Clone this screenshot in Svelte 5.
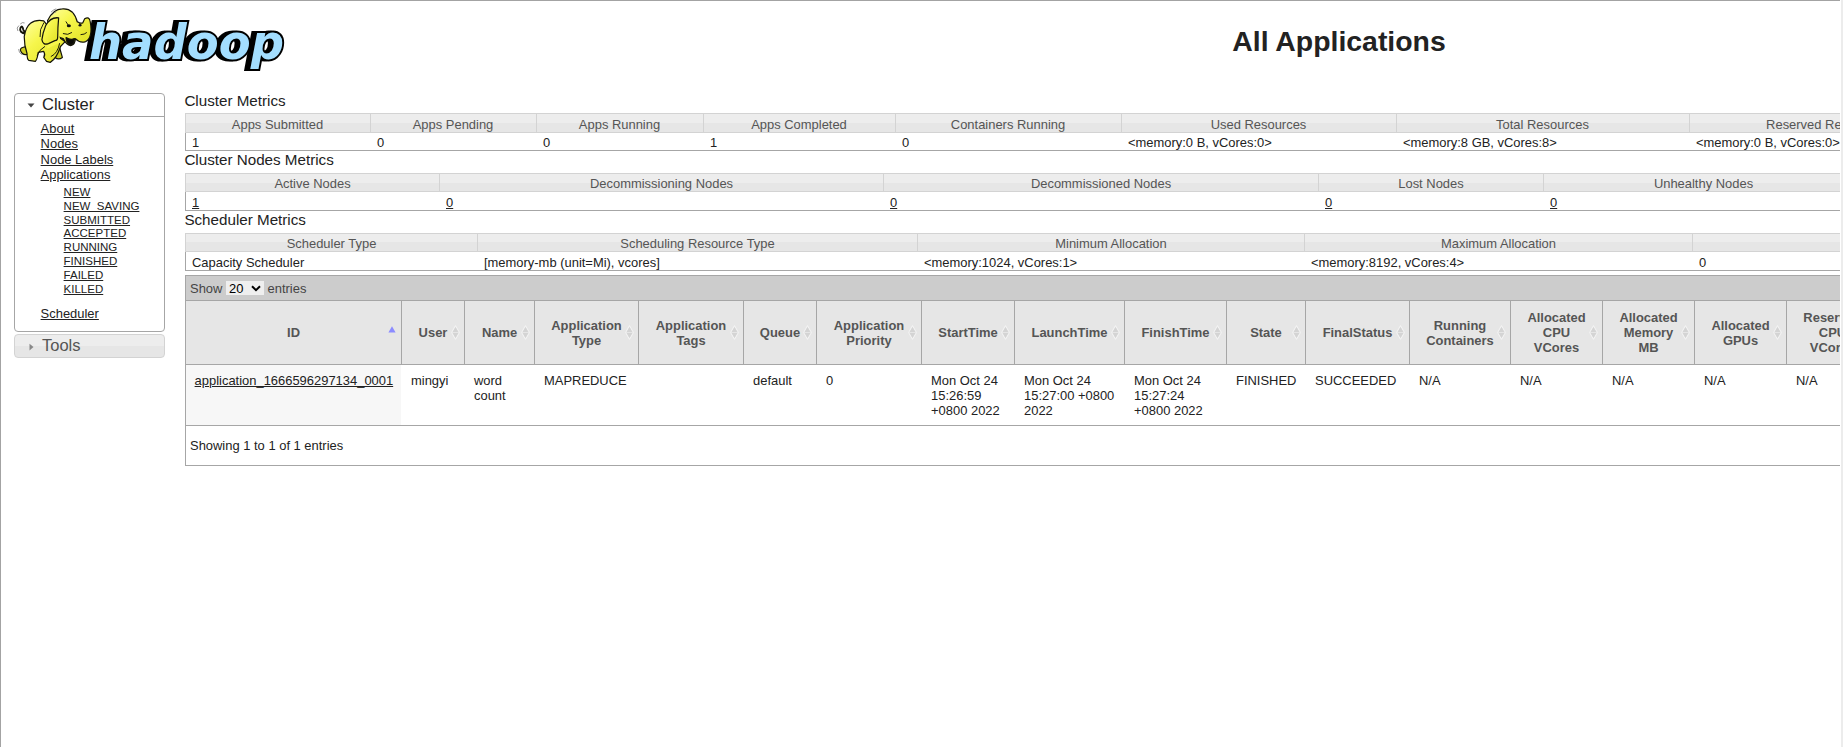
<script>
  const states = ['NEW', 'NEW_SAVING', 'SUBMITTED', 'ACCEPTED', 'RUNNING', 'FINISHED', 'FAILED', 'KILLED'];

  const metrics = [
    {
      title: 'Cluster Metrics',
      kind: 'first',
      cells: [
        [185, 'Apps Submitted', '1'],
        [166, 'Apps Pending', '0'],
        [167, 'Apps Running', '0'],
        [192, 'Apps Completed', '1'],
        [226, 'Containers Running', '0'],
        [275, 'Used Resources', '<memory:0 B, vCores:0>'],
        [293, 'Total Resources', '<memory:8 GB, vCores:8>'],
        [275, 'Reserved Resources', '<memory:0 B, vCores:0>'],
        [221, '', '']
      ]
    },
    {
      title: 'Cluster Nodes Metrics',
      kind: 'linked',
      cells: [
        [254, 'Active Nodes', '1'],
        [444, 'Decommissioning Nodes', '0'],
        [435, 'Decommissioned Nodes', '0'],
        [225, 'Lost Nodes', '0'],
        [320, 'Unhealthy Nodes', '0']
      ]
    },
    {
      title: 'Scheduler Metrics',
      kind: '',
      cells: [
        [292, 'Scheduler Type', 'Capacity Scheduler'],
        [440, 'Scheduling Resource Type', '[memory-mb (unit=Mi), vcores]'],
        [387, 'Minimum Allocation', '<memory:1024, vCores:1>'],
        [388, 'Maximum Allocation', '<memory:8192, vCores:4>'],
        [500, '', '0']
      ]
    }
  ];

  const columns = [
    [216, ['ID'], ['application_1666596297134_0001']],
    [63, ['User'], ['mingyi']],
    [70, ['Name'], ['word', 'count']],
    [104, ['Application', 'Type'], ['MAPREDUCE']],
    [105, ['Application', 'Tags'], []],
    [73, ['Queue'], ['default']],
    [105, ['Application', 'Priority'], ['0']],
    [93, ['StartTime'], ['Mon Oct 24', '15:26:59', '+0800 2022']],
    [110, ['LaunchTime'], ['Mon Oct 24', '15:27:00 +0800', '2022']],
    [102, ['FinishTime'], ['Mon Oct 24', '15:27:24', '+0800 2022']],
    [79, ['State'], ['FINISHED']],
    [104, ['FinalStatus'], ['SUCCEEDED']],
    [101, ['Running', 'Containers'], ['N/A']],
    [92, ['Allocated', 'CPU', 'VCores'], ['N/A']],
    [92, ['Allocated', 'Memory', 'MB'], ['N/A']],
    [92, ['Allocated', 'GPUs'], ['N/A']],
    [92, ['Reserved', 'CPU', 'VCores'], ['N/A']]
  ];

  const tracks = (list) => list.map((c) => c[0] + 'px').join(' ');
</script>

<div class="page">
  <header>
    <svg class="logo" width="285" height="76" viewBox="0 0 285 76">
      <defs>
        <linearGradient id="skin" x1="0" y1="0" x2="1" y2="1">
          <stop offset="0" stop-color="#ffffa0" />
          <stop offset="0.4" stop-color="#f6f64c" />
          <stop offset="1" stop-color="#dede20" />
        </linearGradient>
      </defs>
      <text class="wordmark" x="79" y="57" textLength="195" lengthAdjust="spacingAndGlyphs">hadoop</text>
      <g transform="translate(4 -1) scale(0.93 0.99)" stroke="#15150a" stroke-width="1.3" stroke-linejoin="round" stroke-linecap="round">
        <path fill="#cfcf22" d="M49 47 L52 57 Q48 60 44 57 L42 50Z" />
        <path fill="#cfcf22" d="M13 46 Q6 47 7 50 Q9 55 14 54 L20 48Z" />
        <path fill="none" stroke-width="2" d="M13 33 Q5 32 7 27 Q9 24 10 29 Q11 32 15 32" />
        <path fill="url(#skin)" d="M32 20 Q14 17 11 36 Q11 45 14 53 Q14 59 16 60 L23 61 Q25 59 26 52 L32 51 Q34 54 32 57 L35 61 L39 62 Q46 58 50 46 L55 41 Q41 32 32 20Z" />
        <path fill="url(#skin)" d="M36 20 Q42 8 52 8 Q64 7 68 21 Q71 23 74 22 L76 18 Q81 15 82 21 Q85 37 77 41 Q71 43 66 38 Q66 44 61 45 Q56 44 53 38 Q46 37 40 29Z" />
        <path fill="#0b0b06" d="M56 37 Q61 40 65 38 Q65 45 60 44 Q56 42 56 37Z" />
        <path fill="#f6f64c" stroke="none" d="M33 26 L46 18 L50 42 L36 48Z" />
        <path fill="url(#skin)" d="M48 17 Q39 16 34 25 Q31 32 30 39 Q31 45 37 43 L44 40 Q47 40 47 36 Q47 27 48 17Z" />
        <path fill="none" stroke-width="1" d="M32 22 Q27 29 28 36 M49 43 Q47 53 40 56 M33 46 Q27 49 25 55 M56 21 L58 24 M69 21 L72 24 M53 33 Q58 35 62 32 M72 34 Q76 34 78 32" />
        <ellipse cx="59" cy="25" rx="2.2" ry="1.6" fill="#111" stroke="none" />
        <ellipse cx="71" cy="24.5" rx="1.6" ry="1.3" fill="#111" stroke="none" />
        <path fill="none" stroke="#777" stroke-width="0.8" d="M40 11 Q42 9 45 8 M41 14 Q43 11 45 11 M4 30 Q2 27 5 25 M7 23 Q9 21 11 22 M8 54 Q5 52 5 49" />
      </g>
    </svg>
    <h1>All Applications</h1>
  </header>

  <div class="body">
    <nav>
      <section class="open">
        <h3><svg width="8" height="5" viewBox="0 0 8 5"><path d="M0.5 0.5h7L4 4.5z" fill="#454545" /></svg>Cluster</h3>
        <div class="links">
          <span class="link">About</span>
          <span class="link">Nodes</span>
          <span class="link">Node Labels</span>
          <span class="link">Applications</span>
          <div class="sub">
            {#each states as s}<span class="link">{s}</span>{/each}
          </div>
          <span class="link">Scheduler</span>
        </div>
      </section>
      <section class="closed">
        <h3><svg width="8" height="8" viewBox="0 0 8 8"><path d="M2.5 0.8v6.6L6.5 4z" fill="#888" /></svg>Tools</h3>
      </section>
    </nav>

    <main>
      {#each metrics as m}
        <div class="metric {m.kind}">
          <h2>{m.title}</h2>
          <div class="table" style="grid-template-columns: {tracks(m.cells)}">
            {#each m.cells as c}<div class="mh">{c[1]}</div>{/each}
            {#each m.cells as c}<div class="md"><span>{c[2]}</span></div>{/each}
          </div>
        </div>
      {/each}

      <div class="apps">
        <div class="toolbar">
          Show
          <span class="select">20<svg width="10" height="7" viewBox="0 0 10 7"><path d="M1 1.3L5 5.2L9 1.3" fill="none" stroke="#000" stroke-width="2" /></svg></span>
          entries
        </div>
        <div class="grid" style="grid-template-columns: {tracks(columns)}">
          {#each columns as c, i}
            <div class="th">
              {#each c[1] as line}<span>{line}</span>{/each}
              {#if i === 0}
                <svg class="sort asc" width="8" height="7" viewBox="0 0 8 7"><path d="M4 0.3L7.6 6.5H0.4z" fill="#8c8cff" /></svg>
              {:else}
                <svg class="sort" width="9" height="15" viewBox="0 0 9 15"><path d="M4.5 0.6L8.4 7.5L4.5 14.4L0.6 7.5z" fill="#e6e6e6" stroke="#f4f4f4" stroke-width="1" /><path d="M4.5 2L7.4 6.9H1.6zM4.5 13L7.4 8.1H1.6z" fill="#d4d4d4" /></svg>
              {/if}
            </div>
          {/each}
          {#each columns as c, i}
            <div class="td" class:sorted={i === 0}>
              {#each c[2] as line}<span class:link={i === 0}>{line}</span>{/each}
            </div>
          {/each}
        </div>
        <div class="info">Showing 1 to 1 of 1 entries</div>
      </div>
    </main>
  </div>
</div>
<div class="edge"></div>

<style>
  :global(body) {
    overflow: hidden;
    background: #fff;
  }
  :global(#app) {
    display: flex;
    width: 1843px;
    height: 747px;
    overflow: hidden;
  }
  * {
    box-sizing: border-box;
  }
  .page {
    width: 1840px;
    height: 747px;
    overflow: hidden;
    border-top: 1px solid #a3a3a3;
    border-left: 1px solid #a3a3a3;
    font: 12.95px/15px 'Liberation Sans', Arial, sans-serif;
    color: #222;
  }
  .edge {
    width: 2px;
    margin-left: 1px;
    background: #ececec;
  }
  header {
    display: flex;
    height: 92px;
  }
  .logo {
    flex: none;
    margin: 1px 0 0 9px;
    width: 285px;
    overflow: visible;
  }
  .wordmark {
    font: italic bold 48.5px 'DejaVu Sans', sans-serif;
    fill: #a3deff;
    stroke: #000;
    stroke-width: 4px;
    stroke-linejoin: miter;
    paint-order: stroke;
    filter: drop-shadow(-4px 0 0 #000);
  }
  h1 {
    flex: none;
    width: 1214px;
    margin: 23px 0 0 437px;
    font-size: 28.4px;
    line-height: 34px;
    text-align: center;
  }
  .body {
    display: flex;
  }
  nav {
    flex: none;
    width: 151px;
    margin-left: 13px;
  }
  section {
    border: 1px solid #a6a6a6;
    border-radius: 4px;
  }
  h3 {
    display: flex;
    align-items: center;
    height: 22px;
    margin: 0;
    font-weight: normal;
    font-size: 16.5px;
    line-height: 20px;
    padding-bottom: 2px;
  }
  h3 svg {
    flex: none;
    margin: 3px 7px 0 12px;
    width: 8px;
  }
  .open {
    height: 239px;
  }
  .open h3 {
    height: 23px;
    border-bottom: 1px solid #a6a6a6;
  }
  .closed {
    height: 24px;
    margin-top: 2px;
    border-color: #d3d3d3;
    color: #555;
    background: linear-gradient(#ededed 50%, #e6e6e6 50%);
  }
  .links {
    display: flex;
    flex-direction: column;
    align-items: flex-start;
    padding: 4px 0 0 25.6px;
    line-height: 15.3px;
  }
  .link,
  .linked .md span {
    text-decoration: underline;
  }
  .sub {
    display: flex;
    flex-direction: column;
    align-items: flex-start;
    margin: 3.7px 0 9.3px 23px;
    font-size: 11.5px;
    line-height: 13.85px;
  }
  main {
    flex: none;
    width: 2000px;
    margin-left: 19px;
  }
  h2 {
    height: 22px;
    margin: 0;
    font-weight: normal;
    font-size: 15.2px;
    line-height: 17px;
    padding-left: 0.4px;
  }
  .first h2 {
    height: 20px;
    line-height: 15px;
  }
  .table {
    display: grid;
    width: 2000px;
    height: 38px;
    margin-left: 1px;
    grid-template-rows: 19px 18px;
    border-bottom: 1px solid #a6a6a6;
  }
  .first .table {
    grid-template-rows: 20px 17px;
  }
  .metric {
    white-space: nowrap;
  }
  .mh {
    border: 1px solid #d3d3d3;
    border-right: 0;
    background: linear-gradient(#ededed 50%, #e6e6e6 50%);
    color: #555;
    text-align: center;
    line-height: 19px;
  }
  .first .mh {
    line-height: 21px;
    padding-right: 1px;
  }
  .md {
    padding-left: 7px;
    line-height: 21px;
  }
  .first .md {
    line-height: 19px;
  }
  .md:nth-child(n) {
    border-left: 0 solid #a6a6a6;
  }
  .mh + .md {
    border-left-width: 1px;
    padding-left: 6px;
  }
  .apps {
    margin: 4px 0 0 1px;
    width: 2000px;
    height: 191px;
    border: 1px solid #a6a6a6;
  }
  .toolbar {
    display: flex;
    align-items: center;
    gap: 3.6px;
    height: 24px;
    padding-left: 4px;
    background: #ccc;
    color: #444;
  }
  .select {
    display: flex;
    align-items: center;
    justify-content: space-between;
    width: 38px;
    height: 14px;
    padding: 0 3px;
    background: #efefef;
    color: #000;
  }
  .grid {
    display: grid;
    grid-template-rows: 64px 60px;
    margin-left: -1px;
    border-top: 1px solid #a6a6a6;
    border-bottom: 1px solid #a6a6a6;
  }
  .th {
    position: relative;
    display: flex;
    flex-direction: column;
    align-items: center;
    justify-content: center;
    border-left: 1px solid #a6a6a6;
    border-bottom: 1px solid #a6a6a6;
    background: #e6e6e6;
    color: #555;
    font-weight: bold;
  }
  .sort {
    position: absolute;
    right: 4px;
    top: 24px;
  }
  .asc {
    right: 5px;
    top: 25px;
  }
  .td {
    display: flex;
    flex-direction: column;
    align-items: flex-start;
    padding: 8px 0 0 10px;
    white-space: nowrap;
  }
  .sorted {
    border-left: 1px solid #a6a6a6;
    padding-left: 8.6px;
    background: #f7f7f7;
  }
  .info {
    padding: 12px 0 0 4px;
  }
</style>
